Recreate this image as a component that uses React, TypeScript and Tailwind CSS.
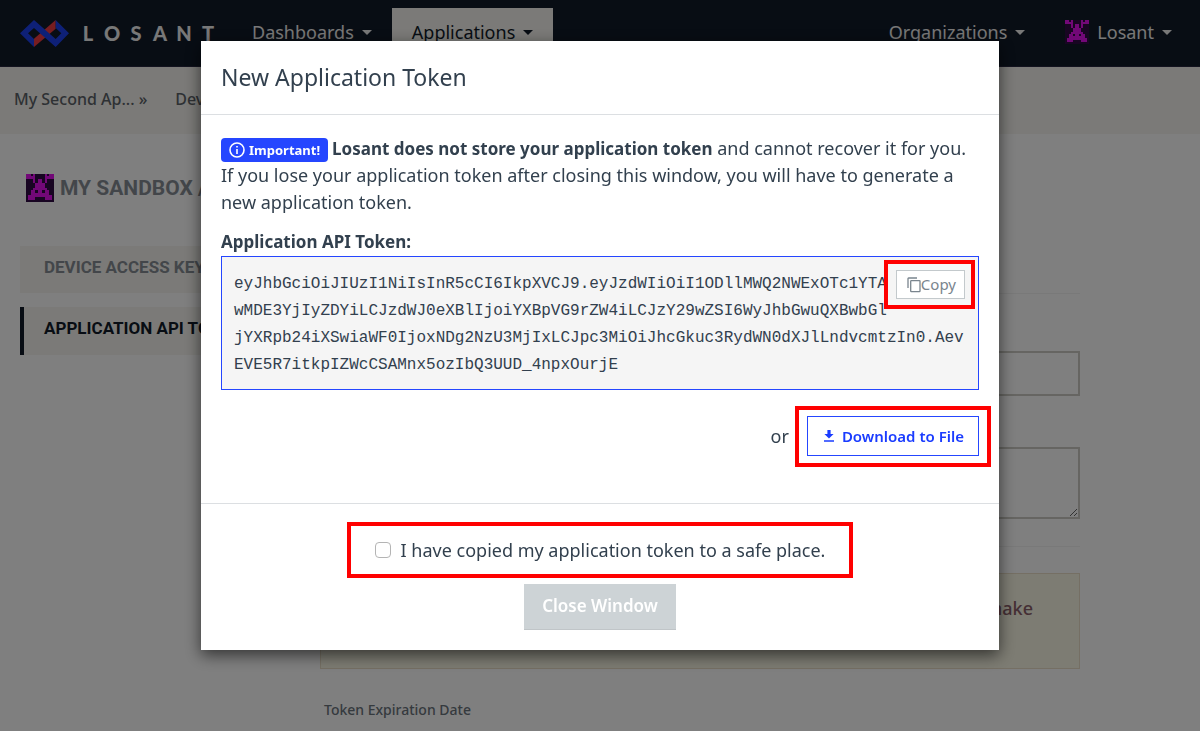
import { useState } from "react";

const TOKEN_LINES = [
  "eyJhbGciOiJIUzI1NiIsInR5cCI6IkpXVCJ9.eyJzdWIiOiI1ODllMWQ2NWExOTc1YTA",
  "wMDE3YjIyZDYiLCJzdWJ0eXBlIjoiYXBpVG9rZW4iLCJzY29wZSI6WyJhbGwuQXBwbGl",
  "jYXRpb24iXSwiaWF0IjoxNDg2NzU3MjIxLCJpc3MiOiJhcGkuc3RydWN0dXJlLndvcmtzIn0.Aev",
  "EVE5R7itkpIZWcCSAMnx5ozIbQ3UUD_4npxOurjE",
];

const AVATAR_ROWS = [
  "##.#....#.##",
  "####....####",
  "...#.##.#...",
  "...#.##.#...",
  "....####....",
  "....####....",
  "...######...",
  "..##.##.##..",
  "..########..",
  ".##########.",
  ".###....###.",
  "............",
];

function LogoMark() {
  return (
    <svg width="49" height="27" viewBox="0 0 147 81" aria-hidden="true">
      <polygon points="107,0 107,26 42,81 42,56" fill="#f03a40" />
      <polygon points="42,81 0,40 42,0 107,57 124,40 107,24 107,0 147,40 107,81 42,24 24,40 42,57" fill="#1c41ee" />
    </svg>
  );
}

function Avatar({ className }: { className?: string }) {
  return (
    <svg className={className} viewBox="0 0 12 12" shapeRendering="crispEdges" aria-hidden="true">
      <rect width="12" height="12" fill="#300a45" />
      {AVATAR_ROWS.flatMap((row, y) =>
        row.split("").map((cell, x) =>
          cell === "#" ? <rect key={`${x}-${y}`} x={x} y={y} width="1" height="1" fill="#e410ee" /> : null,
        ),
      )}
    </svg>
  );
}

function Caret() {
  return <span className="inline-block border-x-5 border-t-5 border-x-transparent border-t-current" />;
}

function InfoIcon() {
  return (
    <svg width="16" height="16" viewBox="0 0 16 16" fill="none" stroke="currentColor" aria-hidden="true">
      <circle cx="8" cy="8" r="7" strokeWidth="1.6" />
      <path d="M8 7v5M8 4v1.6" strokeWidth="1.6" />
    </svg>
  );
}

function CopyIcon() {
  return (
    <svg width="14" height="16" viewBox="0 0 14 16" fill="none" stroke="currentColor" strokeWidth="1.3" aria-hidden="true">
      <path d="M1 11V1.6Q1 1 1.6 1H10" />
      <rect x="3.7" y="3.7" width="9.3" height="11" rx="0.6" />
    </svg>
  );
}

function DownloadIcon() {
  return (
    <svg width="10" height="12" viewBox="0 0 10 12" fill="currentColor" aria-hidden="true">
      <path d="M3.4 0h3.2v4H9.6L5 8.6.4 4h3zM0 10.2h10v1.6H0z" />
    </svg>
  );
}

function Frame({ className }: { className: string }) {
  return <span className={`pointer-events-none absolute border-4 border-[#ff0000] ${className}`} />;
}

function Header() {
  return (
    <header className="flex h-[67px] items-center border-b border-[#26263e] bg-[#101a28] pl-5 pr-7 text-lg text-[#f0f0f0]">
      <a href="#home" aria-label="Losant" className="flex items-center gap-[7px]">
        <LogoMark />
        <span className="flex font-['Lato',sans-serif] text-xl font-black">
          {"LOSANT".split("").map((letter) => (
            <span key={letter} className="w-6 text-center">{letter}</span>
          ))}
        </span>
      </a>
      <nav className="flex flex-1 items-end self-stretch">
        <button className="flex h-[58px] items-center gap-2 pl-8 pr-5 pb-2.5">Dashboards <Caret /></button>
        <button className="flex h-[58px] items-center gap-2 bg-[#f6f5f0] px-5 pb-2.5 text-[#101a28]">Applications <Caret /></button>
        <span className="flex-1" />
        <button className="flex h-[58px] items-center gap-2 pb-2.5">Organizations <Caret /></button>
        <button className="ml-10 flex h-[58px] items-center gap-2 pb-2.5">
          <Avatar className="size-6" />
          Losant <Caret />
        </button>
      </nav>
    </header>
  );
}

function Page() {
  return (
    <div className="min-h-screen bg-white">
      <Header />
      <nav className="flex h-[67px] items-center gap-7 bg-[#f6f5f0] px-3.5 pb-1 text-base font-medium text-[#5c6268]">
        <a href="#application">My Second Ap... »</a>
        <a href="#devices">Devices</a>
      </nav>
      <div className="max-w-[1080px] pl-5">
        <h1 className="flex items-center gap-1.5 px-1.5 pt-10 font-['Roboto',sans-serif] text-[21px] leading-7 font-bold text-[#868d94]">
          <Avatar className="size-7" />
          MY SANDBOX /
        </h1>
        <div className="flex gap-5 pt-11">
          <nav className="flex w-[280px] shrink-0 flex-col gap-3.5 font-['Roboto',sans-serif] text-[17px] font-bold">
            <a href="#keys" className="flex h-[47px] items-center bg-[#f6f5f0] pb-1 pl-6 text-[#868d94]">DEVICE ACCESS KEYS</a>
            <a href="#tokens" className="flex h-12 items-center border-l-4 border-[#101a28] bg-[#f6f5f0] pb-1 pl-5 text-[#101a28]">APPLICATION API TOKENS</a>
          </nav>
          <main className="flex flex-1 flex-col">
            <hr className="mt-[47px] border-[#f2f2f2]" />
            <input aria-label="Name" className="mt-[57px] h-[45px] w-full border-2 border-[#cccbc4] px-3" />
            <textarea aria-label="Description" className="mt-[51px] h-[72px] w-full border-2 border-[#cccbc4] px-3" />
            <hr className="mt-[27px] border-[#f2f2f2]" />
            <p className="mt-[26px] h-24 border border-[#eadfc8] bg-[#faf8e6] px-[46px] pt-5 text-right text-lg font-medium leading-7 text-[#8a5f6a]">make</p>
            <label className="mt-[31px] px-1 text-sm font-medium text-[#6b747d]">Token Expiration Date</label>
          </main>
        </div>
      </div>
    </div>
  );
}

function TokenDialog() {
  const [copied, setCopied] = useState(false);
  return (
    <div
      role="dialog"
      aria-labelledby="dialog-title"
      className="mx-auto w-full max-w-[798px] bg-white text-lg text-[#32404e] shadow-[0_5px_15px_rgba(0,0,0,0.6)]"
    >
      <header className="border-b border-[#dcdfe2] px-5 pt-5 pb-[21px]">
        <h2 id="dialog-title" className="text-[23px] leading-8">New Application Token</h2>
      </header>
      <div className="px-5 pt-5 pb-[47px]">
        <p className="leading-[27px]">
          <span className="mr-1 inline-flex h-6 items-center gap-1 rounded-sm bg-[#2546ff] px-2 align-middle text-[13px] font-bold text-white">
            <InfoIcon /> Important!
          </span>
          <strong className="text-[17px] font-bold">Losant does not store your application token</strong> and cannot recover it for you.
          If you lose your application token after closing this window, you will have to generate a new application token.
        </p>
        <p className="mt-3 mb-px text-[17px] font-bold leading-[27px]">Application API Token:</p>
        <div className="relative border border-[#2546ff] bg-[#f5f5f5] px-3 pt-3.5 pb-2.5">
          <code className="flex flex-col items-start font-['Liberation_Mono',monospace] text-base leading-[27px]">
            {TOKEN_LINES.map((line) => (
              <span key={line}>{line}</span>
            ))}
          </code>
          <div className="absolute right-[13px] top-[13px]">
            <button className="flex h-[29px] items-center border border-[#c3c9cc] bg-white pl-2.5 pr-2 text-[15px] text-[#7a858e]">
              <CopyIcon /> Copy
            </button>
            <Frame className="-left-3 -right-2.5 -inset-y-2.5" />
          </div>
        </div>
        <div className="mt-[26px] flex items-center justify-end gap-[18px]">
          or
          <div className="relative">
            <button className="flex h-10 items-center gap-2 border border-[#2546ff] pl-4 pr-3.5 text-[15px] font-semibold text-[#1a3cff]">
              <DownloadIcon /> Download to File
            </button>
            <Frame className="-inset-x-3 -top-2.5 -bottom-[11px]" />
          </div>
        </div>
      </div>
      <footer className="flex flex-col items-center border-t border-[#dcdfe2] px-5 pt-8 pb-5">
        <label className="relative flex items-center gap-2.5">
          <input
            type="checkbox"
            checked={copied}
            onChange={(event) => setCopied(event.target.checked)}
            className="size-4 appearance-none rounded-sm border border-[#b4b4b4] bg-white checked:bg-[#2546ff]"
          />
          I have copied my application token to a safe place.
          <Frame className="-inset-x-7 -inset-y-3.5" />
        </label>
        <button disabled={!copied} className="mt-5 h-[46px] border-b border-[#c0c5c8] bg-[#cdd3d6] px-[18px] text-[17px] font-semibold text-white">
          Close Window
        </button>
      </footer>
    </div>
  );
}

export default function App() {
  return (
    <div className="font-['Noto_Sans',sans-serif]">
      <Page />
      <div className="fixed inset-0 bg-black/50 pt-[41px]">
        <TokenDialog />
      </div>
    </div>
  );
}
